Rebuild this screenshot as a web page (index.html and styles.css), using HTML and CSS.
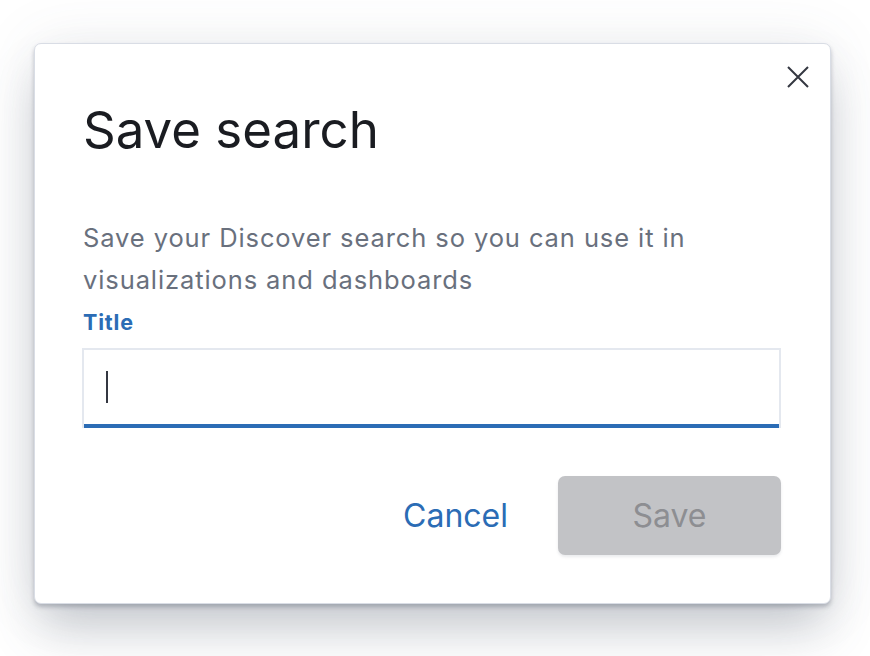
FILE: index.html
```html
<!DOCTYPE html>
<html lang="en">
<head>
<meta charset="utf-8">
<title>Save search</title>
<link rel="stylesheet" href="styles.css">
</head>
<body>
<div class="modal">
  <button class="close" aria-label="Close">
    <svg width="22" height="22" viewBox="0 0 22 22"><path d="M1 1L21 21M21 1L1 21" stroke="#343741" stroke-width="2" fill="none"/></svg>
  </button>
  <h1 class="title">Save search</h1>
  <p class="desc">Save your Discover search so you can use it in visualizations and dashboards</p>
  <label class="label">Title</label>
  <div class="field"><span class="caret"></span></div>
  <div class="footer">
    <button class="btn-link">Cancel</button>
    <button class="btn-save" disabled>Save</button>
  </div>
</div>
</body>
</html>
```
FILE: styles.css
```css
html, body {
  margin: 0;
  padding: 0;
  background: #ffffff;
  font-family: Inter, "Noto Sans", sans-serif;
}
body {
  width: 870px;
  height: 656px;
  overflow: hidden;
  padding-top: 43px;
  box-sizing: border-box;
}
.modal {
  position: relative;
  margin-left: 34px;
  width: 797px;
  height: 561px;
  box-sizing: border-box;
  background: #fff;
  border: 1px solid #d9dde5;
  border-radius: 7px;
  padding: 56px 49px 0 47px;
  display: flex;
  flex-direction: column;
  box-shadow: 0 3px 4px rgba(80, 88, 105, 0.35),
              0 30px 50px -6px rgba(80, 88, 105, 0.3),
              0 0 60px rgba(80, 88, 105, 0.10);
}
.close {
  position: absolute;
  top: 22px;
  right: 21px;
  width: 22px;
  height: 22px;
  padding: 0;
  border: 0;
  background: none;
  display: flex;
}
.title {
  margin: 0 0 0 1px;
  font-size: 51px;
  line-height: 60px;
  font-weight: 400;
  color: #1a1c21;
  letter-spacing: 0;
}
.desc {
  margin: 57px 0 0 1px;
  font-size: 25.5px;
  line-height: 42px;
  color: #69707d;
  letter-spacing: 0.9px;
  width: 680px;
}
.label {
  margin: 7px 0 0 1px;
  font-size: 21.5px;
  line-height: 28px;
  font-weight: 700;
  color: #2b6cb5;
  letter-spacing: 0.8px;
}
.field {
  margin-top: 12px;
  height: 80px;
  box-sizing: border-box;
  border: 2px solid #e4e8ef;
  border-bottom: 0;
  box-shadow: inset 0 -4px 0 #2b6cb5;
  display: flex;
  align-items: center;
  padding-left: 22px;
}
.caret {
  width: 2px;
  height: 32px;
  background: #343741;
  margin-top: -4px;
}
.footer {
  margin-top: 48px;
  display: flex;
  justify-content: flex-end;
  align-items: center;
  gap: 50px;
}
.btn-link {
  border: 0;
  background: none;
  padding: 0;
  font-family: inherit;
  font-size: 32px;
  color: #2b6cb5;
}
.btn-save {
  width: 223px;
  height: 79px;
  border: 0;
  border-radius: 7px;
  background: #c2c3c6;
  color: #8d8e92;
  font-family: inherit;
  font-size: 32px;
  box-shadow: 0 2px 3px rgba(80, 88, 105, 0.12);
}
```
